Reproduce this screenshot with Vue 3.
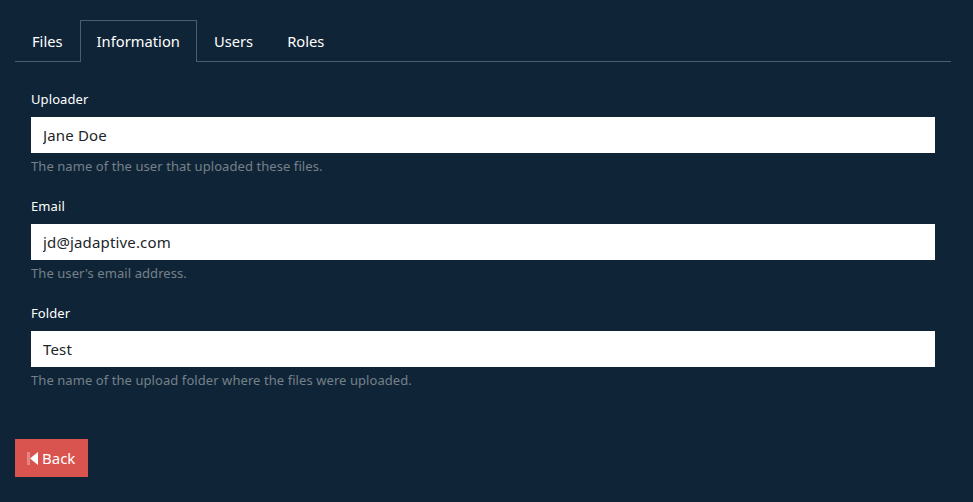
<script setup>
const fields = [
  { label: 'Uploader', value: 'Jane Doe', help: 'The name of the user that uploaded these files.' },
  { label: 'Email', value: 'jd@jadaptive.com', help: "The user's email address." },
  { label: 'Folder', value: 'Test', help: 'The name of the upload folder where the files were uploaded.' },
]
const tabs = ['Files', 'Information', 'Users', 'Roles']
</script>

<template>
  <div class="page">
    <ul class="tabs">
      <li v-for="t in tabs" :key="t" class="tab" :class="{ active: t === 'Information' }">{{ t }}</li>
    </ul>
    <div class="form">
      <div v-for="f in fields" :key="f.label" class="field">
        <label class="label">{{ f.label }}</label>
        <input class="input" :value="f.value" />
        <small class="help">{{ f.help }}</small>
      </div>
    </div>
    <button class="back">
      <svg class="icon" width="11" height="13" viewBox="0 0 11 13"><rect x="0" y="0" width="3" height="13" fill="#fff" opacity="0.3"/><path d="M11 0V13L3 6.5Z" fill="#fff"/></svg>
      <span>Back</span>
    </button>
  </div>
</template>

<style scoped>
.page { padding: 20px 22px 25px 15px; font-family: "Noto Sans", sans-serif; color: #fff; box-sizing: border-box; width: 973px; height: 502px; }
.tabs { list-style: none; margin: 0; padding: 0; display: flex; border-bottom: 1px solid #4e5d6c; height: 41px; }
.tab { padding: 0 16px; line-height: 41px; font-size: 14.7px; border: 1px solid transparent; border-bottom: 0; height: 42px; box-sizing: border-box; color: #fff; }
.active { border-color: #4e5d6c; background: #0f2537; letter-spacing: 0.03px; }
.form { padding: 0 16px; margin-top: 27px; }
.field { margin-bottom: 20px; display: flex; flex-direction: column; }
.label { font-size: 13px; line-height: 20px; font-weight: 400; letter-spacing: 0.1px; margin-bottom: 8px; }
.input { height: 36px; border: 0; padding: 0 12px; font: 15px "Noto Sans", sans-serif; letter-spacing: 0.15px; color: #212529; background: #fff; box-sizing: border-box; outline: none; border-radius: 0; }
.help { font-size: 13px; line-height: 20px; margin-top: 3px; letter-spacing: 0.07px; color: #76808a; }
.back { margin-top: 49px; display: flex; align-items: center; gap: 4px; height: 38px; width: 73px; padding: 0 0 0 12px; border: 0; background: #d9534f; color: #fff; font: 15px "Noto Sans", sans-serif; }
</style>

<style>
html, body { background: #0f2537; margin: 0; }
</style>
